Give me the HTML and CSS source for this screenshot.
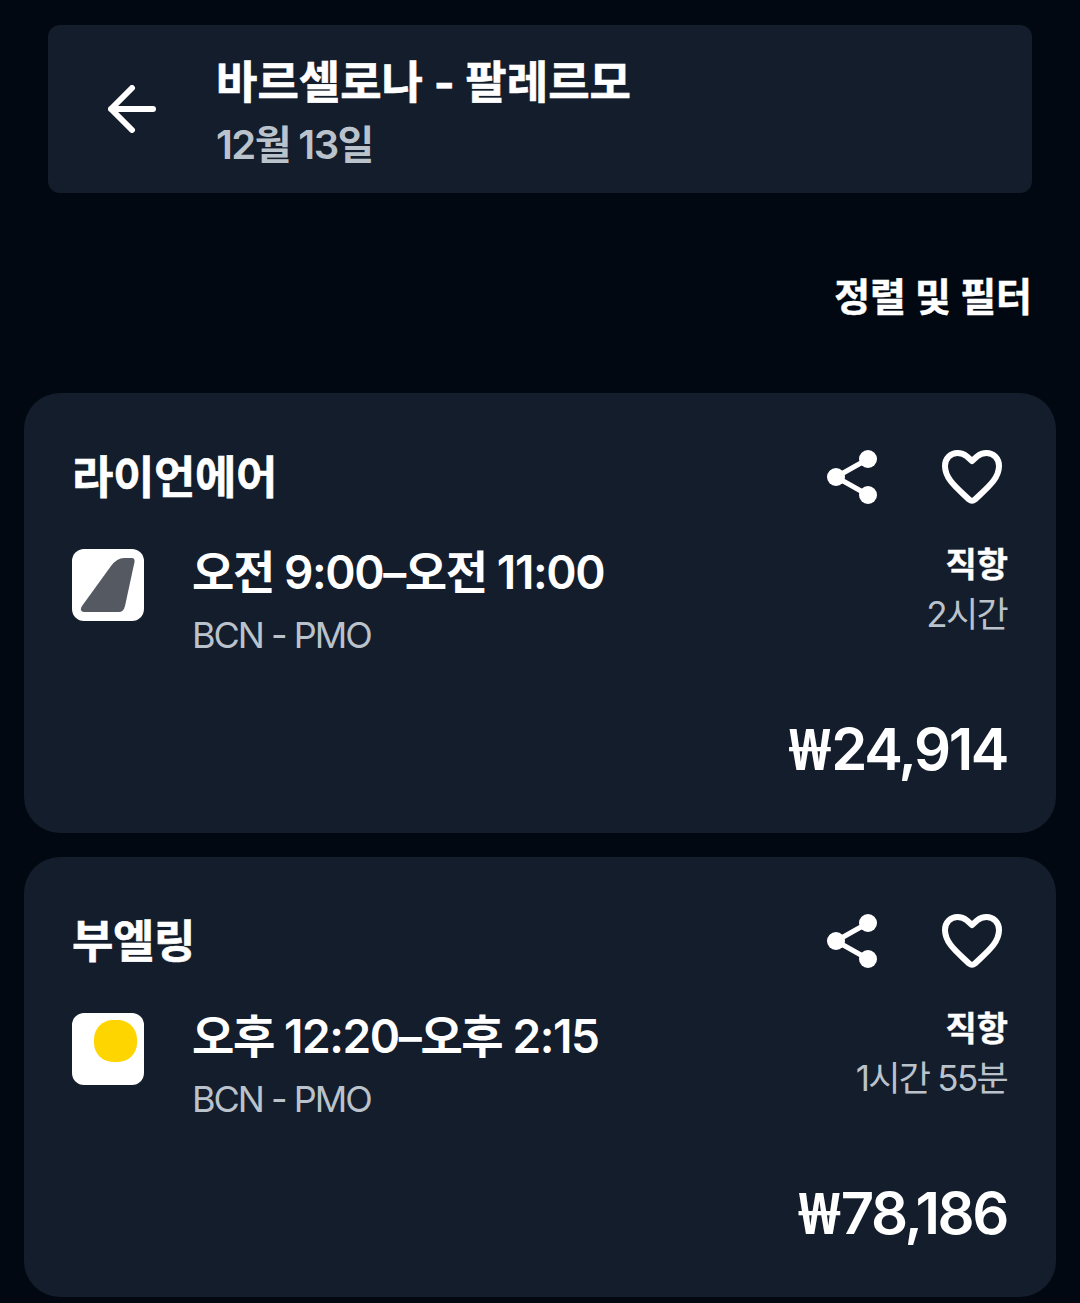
FILE: index.html
```html
<!DOCTYPE html>
<html lang="ko">
<head>
    <meta charset="UTF-8" />
    <meta name="viewport" content="width=device-width, initial-scale=1.0" />
    <title>바르셀로나 - 팔레르모</title>
    <link rel="stylesheet" href="styles.css">
</head>
<body>
    <header class="search-bar">
        <svg class="back" viewBox="0 0 48 48"><path d="M24 3 L3 24 L24 45 M3 24 H45" /></svg>
        <div class="route">
            <h1>바르셀로나 - 팔레르모</h1>
            <p>12월 13일</p>
        </div>
    </header>
    <div class="filter">정렬 및 필터</div>

    <main class="results">
        <article class="card">
            <div class="card-head">
                <h2>라이언에어</h2>
                <svg class="share" viewBox="0 0 50 54"><path d="M41 9 L9 27 L41 45" /><circle cx="41" cy="9" r="9" /><circle cx="9" cy="27" r="9" /><circle cx="41" cy="45" r="9" /></svg>
                <svg class="heart" viewBox="0 0 60 54"><path d="M30 11 L25 6.5 C22 4 19 3 15.5 3 C8.5 3 3 8.5 3 16 C3 29 15 38 27 49.5 Q30 52 33 49.5 C45 38 57 29 57 16 C57 8.5 51.5 3 44.5 3 C41 3 38 4 35 6.5 Z" /></svg>
            </div>
            <div class="flight">
                <svg class="logo" viewBox="0 0 72 72"><path class="tail" d="M52 9 H60 Q63 9 62.5 13 L53 57 Q51.5 63 47 63 H12 Q7 62 10 57 L39 17 Q45 9 52 9 Z" /></svg>
                <div class="times">
                    <h3>오전 9:00–오전 11:00</h3>
                    <p>BCN - PMO</p>
                </div>
                <div class="stops">
                    <strong>직항</strong>
                    <p>2시간</p>
                </div>
            </div>
            <div class="price"><span class="won">₩</span>24,914</div>
        </article>

        <article class="card">
            <div class="card-head">
                <h2>부엘링</h2>
                <svg class="share" viewBox="0 0 50 54"><path d="M41 9 L9 27 L41 45" /><circle cx="41" cy="9" r="9" /><circle cx="9" cy="27" r="9" /><circle cx="41" cy="45" r="9" /></svg>
                <svg class="heart" viewBox="0 0 60 54"><path d="M30 11 L25 6.5 C22 4 19 3 15.5 3 C8.5 3 3 8.5 3 16 C3 29 15 38 27 49.5 Q30 52 33 49.5 C45 38 57 29 57 16 C57 8.5 51.5 3 44.5 3 C41 3 38 4 35 6.5 Z" /></svg>
            </div>
            <div class="flight">
                <svg class="logo" viewBox="0 0 72 72"><rect class="dot" x="22" y="7" width="43" height="42" rx="19" /></svg>
                <div class="times">
                    <h3>오후 12:20–오후 2:15</h3>
                    <p>BCN - PMO</p>
                </div>
                <div class="stops">
                    <strong>직항</strong>
                    <p>1시간 55분</p>
                </div>
            </div>
            <div class="price"><span class="won">₩</span>78,186</div>
        </article>
    </main>
</body>
</html>
```
FILE: styles.css
```css
* {
    box-sizing: border-box;
}

body {
    margin: 0;
    padding: 25px 24px 6px;
    background-color: #010811;
    color: #fff;
    font-family: Inter, "Noto Sans CJK KR", sans-serif;
    font-feature-settings: "calt" 0;
}

h1, h2, h3, p {
    margin: 0;
    white-space: nowrap;
}

svg {
    display: block;
    flex-shrink: 0;
}

.search-bar {
    display: flex;
    height: 168px;
    margin: 0 24px;
    padding: 26px 60px;
    border-radius: 12px;
    background-color: #141d2b;
}

.back {
    width: 48px;
    height: 48px;
    margin: 34px 60px 0 0;
    fill: none;
    stroke: #fff;
    stroke-width: 6;
    stroke-linecap: round;
    stroke-linejoin: round;
}

.route h1 {
    font-size: 45px;
    line-height: 64px;
    font-weight: 700;
    -webkit-text-stroke: 0.6px #fff;
}

.route p {
    font-size: 40px;
    line-height: 60px;
    font-weight: 600;
    letter-spacing: -1.6px;
    color: #bac2cc;
}

.filter {
    height: 200px;
    padding: 72px 24px 0 0;
    text-align: right;
    font-size: 39px;
    line-height: 64px;
    font-weight: 700;
    -webkit-text-stroke: 0.5px #fff;
}

.results {
    display: flex;
    flex-direction: column;
    gap: 24px;
}

.card {
    height: 440px;
    padding: 48px;
    border-radius: 36px;
    background-color: #141d2b;
}

.card-head {
    display: flex;
    align-items: center;
    height: 72px;
    padding-right: 6px;
}

.card-head h2 {
    flex: 1;
    padding-bottom: 5px;
    font-size: 45px;
    font-weight: 700;
    letter-spacing: -0.4px;
    -webkit-text-stroke: 0.6px #fff;
}

.share {
    width: 50px;
    height: 54px;
    margin-right: 65px;
    fill: #fff;
}

.share path {
    fill: none;
    stroke: #fff;
    stroke-width: 5;
}

.heart {
    width: 60px;
    height: 54px;
    fill: none;
    stroke: #fff;
    stroke-width: 6;
    stroke-linejoin: round;
}

.flight {
    display: flex;
    height: 144px;
    padding-top: 24px;
}

.logo {
    width: 72px;
    height: 72px;
    margin: 12px 48px 0 0;
    border-radius: 12px;
    background-color: #fff;
}

.tail,
.dot {
    filter: blur(0.7px);
}

.tail {
    fill: #555962;
}

.dot {
    fill: #ffd500;
}

.times {
    flex: 1;
}

.times h3 {
    font-size: 46px;
    line-height: 70px;
    font-weight: 600;
    letter-spacing: -1.4px;
}

.times p {
    padding-top: 1px;
    font-size: 36px;
    line-height: 55px;
    letter-spacing: -2px;
    color: #bac2cc;
}

.stops {
    padding-top: 3px;
    text-align: right;
    font-size: 35px;
}

.stops strong {
    display: block;
    font-size: 34px;
    line-height: 50px;
    -webkit-text-stroke: 0.4px #fff;
}

.stops p {
    margin-right: 1px;
    line-height: 48px;
    letter-spacing: -1.7px;
    color: #bac2cc;
}

.price {
    margin: 61px 1px 0 0;
    text-align: right;
    font-size: 58px;
    line-height: 60px;
    font-weight: 600;
    letter-spacing: -2.4px;
}

.won {
    font-family: "Noto Sans", sans-serif;
    font-weight: 700;
    letter-spacing: 0;
}
```
